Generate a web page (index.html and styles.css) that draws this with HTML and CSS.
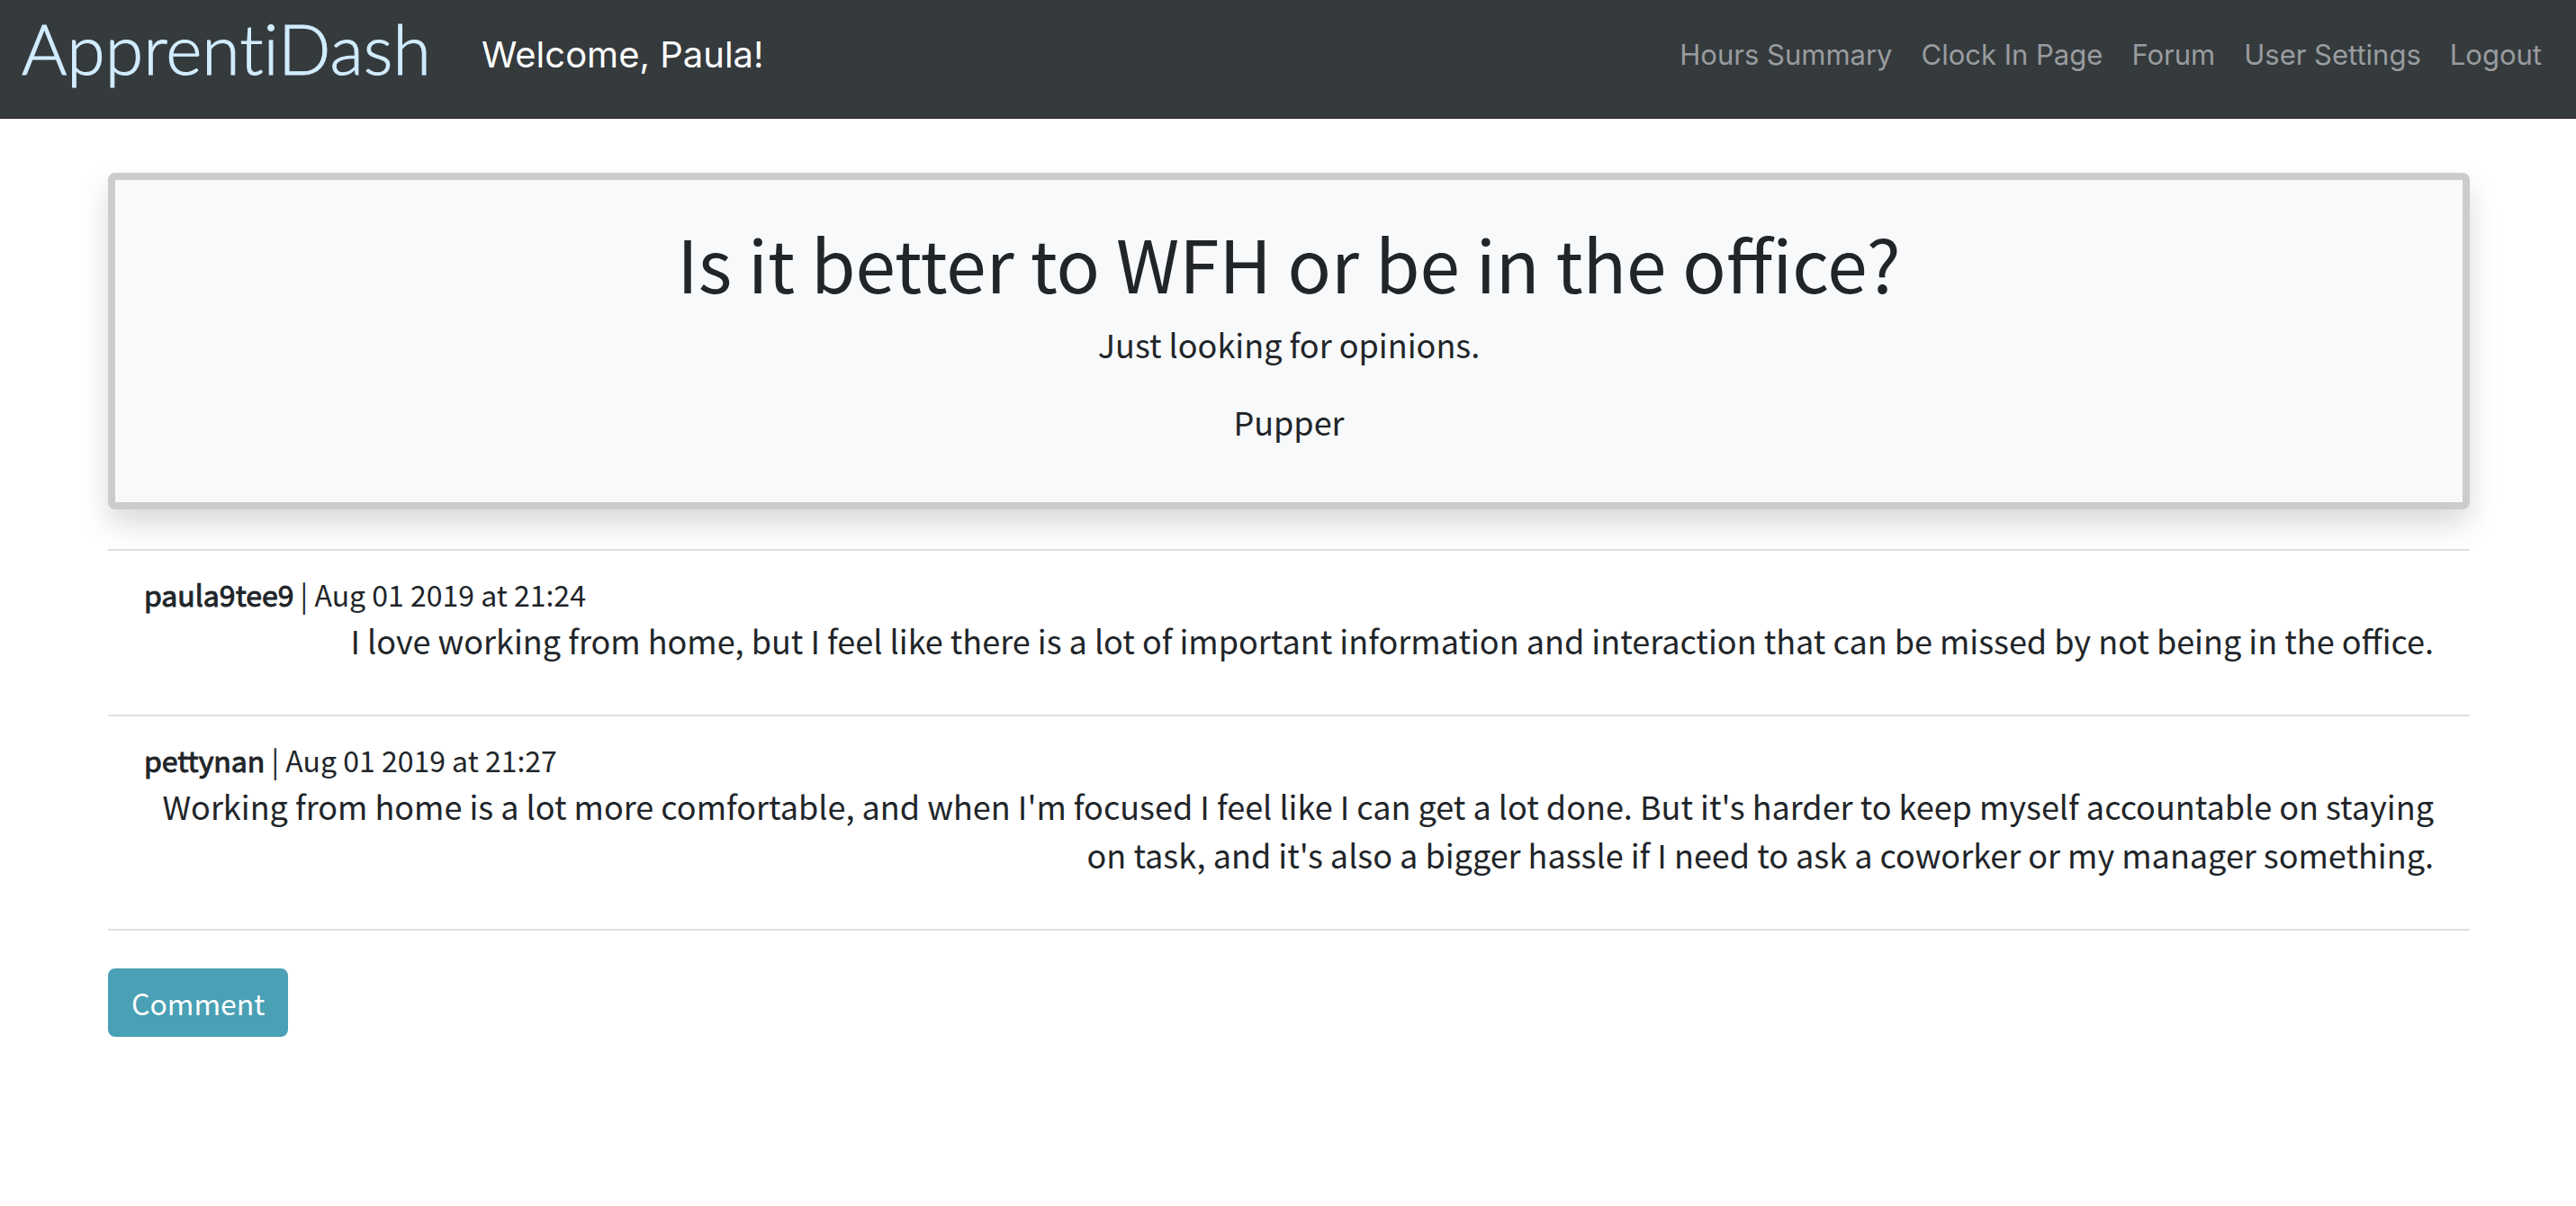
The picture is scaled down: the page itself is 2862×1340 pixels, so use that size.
FILE: index.html
```html
<!DOCTYPE html>
<html lang="en">
<head>
  <meta charset="utf-8">
  <meta name="viewport" content="width=device-width, initial-scale=1">
  <title>ApprentiDash</title>
  <link rel="stylesheet" href="styles.css">
</head>
<body>
  <header class="navbar">
    <a class="brand" href="#">ApprentiDash</a>
    <span class="welcome">Welcome, Paula!</span>
    <nav class="links">
      <a href="#">Hours Summary</a>
      <a href="#">Clock In Page</a>
      <a href="#">Forum</a>
      <a href="#">User Settings</a>
      <a href="#">Logout</a>
    </nav>
  </header>
  <main class="page">
    <section class="topic">
      <h1>Is it better to WFH or be in the office?</h1>
      <p>Just looking for opinions.</p>
      <p>Pupper</p>
    </section>
    <section class="comments">
      <article class="comment">
        <div class="meta"><strong>paula9tee9</strong> | Aug 01 2019 at 21:24</div>
        <p>I love working from home, but I feel like there is a lot of important information and interaction that can be missed by not being in the office.</p>
      </article>
      <article class="comment">
        <div class="meta"><strong>pettynan</strong> | Aug 01 2019 at 21:27</div>
        <p>Working from home is a lot more comfortable, and when I'm focused I feel like I can get a lot done. But it's harder to keep myself accountable on staying on task, and it's also a bigger hassle if I need to ask a coworker or my manager something.</p>
      </article>
    </section>
    <button class="btn" type="button">Comment</button>
  </main>
</body>
</html>
```
FILE: styles.css
```css
* {
  box-sizing: border-box;
}

body {
  margin: 0;
  background: #fff;
  color: #212529;
  font-family: "Noto Sans CJK KR", "Noto Sans CJK JP", sans-serif;
  font-size: 36px;
  line-height: 54px;
}

h1,
p {
  margin: 0;
}

.navbar {
  display: flex;
  align-items: center;
  min-height: 132px;
  padding: 0 38px 8px 24px;
  border-bottom: 2px solid #343138;
  background: #353a3d;
  font-family: Inter, "Liberation Sans", sans-serif;
}

.navbar a {
  text-decoration: none;
}

.brand {
  margin-bottom: 16px;
  color: #d1ecff;
  font-family: Lato, sans-serif;
  font-size: 77px;
  font-variant-ligatures: none;
  font-weight: 300;
  line-height: 84px;
  -webkit-text-stroke: 1px currentColor;
}

.welcome {
  margin-left: 56px;
  color: #fff;
  font-size: 40px;
}

.links {
  display: flex;
  gap: 32px;
  margin-left: auto;
  font-size: 31px;
}

.links a {
  color: #999c9f;
}

.page {
  padding: 60px 118px 60px 120px;
}

.topic {
  margin-bottom: 44px;
  padding: 43px 32px 31px;
  border: 8px solid #ccc;
  border-radius: 8px;
  background: #f8f9fa;
  box-shadow: 0 16px 32px rgba(0, 0, 0, 0.15);
  text-align: center;
}

.topic h1 {
  margin-bottom: 16px;
  font-size: 80px;
  font-weight: 400;
  line-height: 96px;
}

.topic p {
  margin-bottom: 32px;
}

.comments {
  margin-bottom: 42px;
  border-bottom: 2px solid #dfdfdf;
}

.comment {
  padding: 24px 40px 56px;
  border-top: 2px solid #dfdfdf;
}

.comment p {
  text-align: right;
}

.meta {
  font-size: 32px;
  line-height: 48px;
}

.meta strong {
  font-weight: 400;
  -webkit-text-stroke: 1px currentColor;
}

.btn {
  display: block;
  padding: 12px 24px;
  border: 2px solid #4aa0b5;
  border-radius: 8px;
  background: #4aa0b5;
  color: #fff;
  font: inherit;
  font-size: 32px;
  line-height: 48px;
}
```
